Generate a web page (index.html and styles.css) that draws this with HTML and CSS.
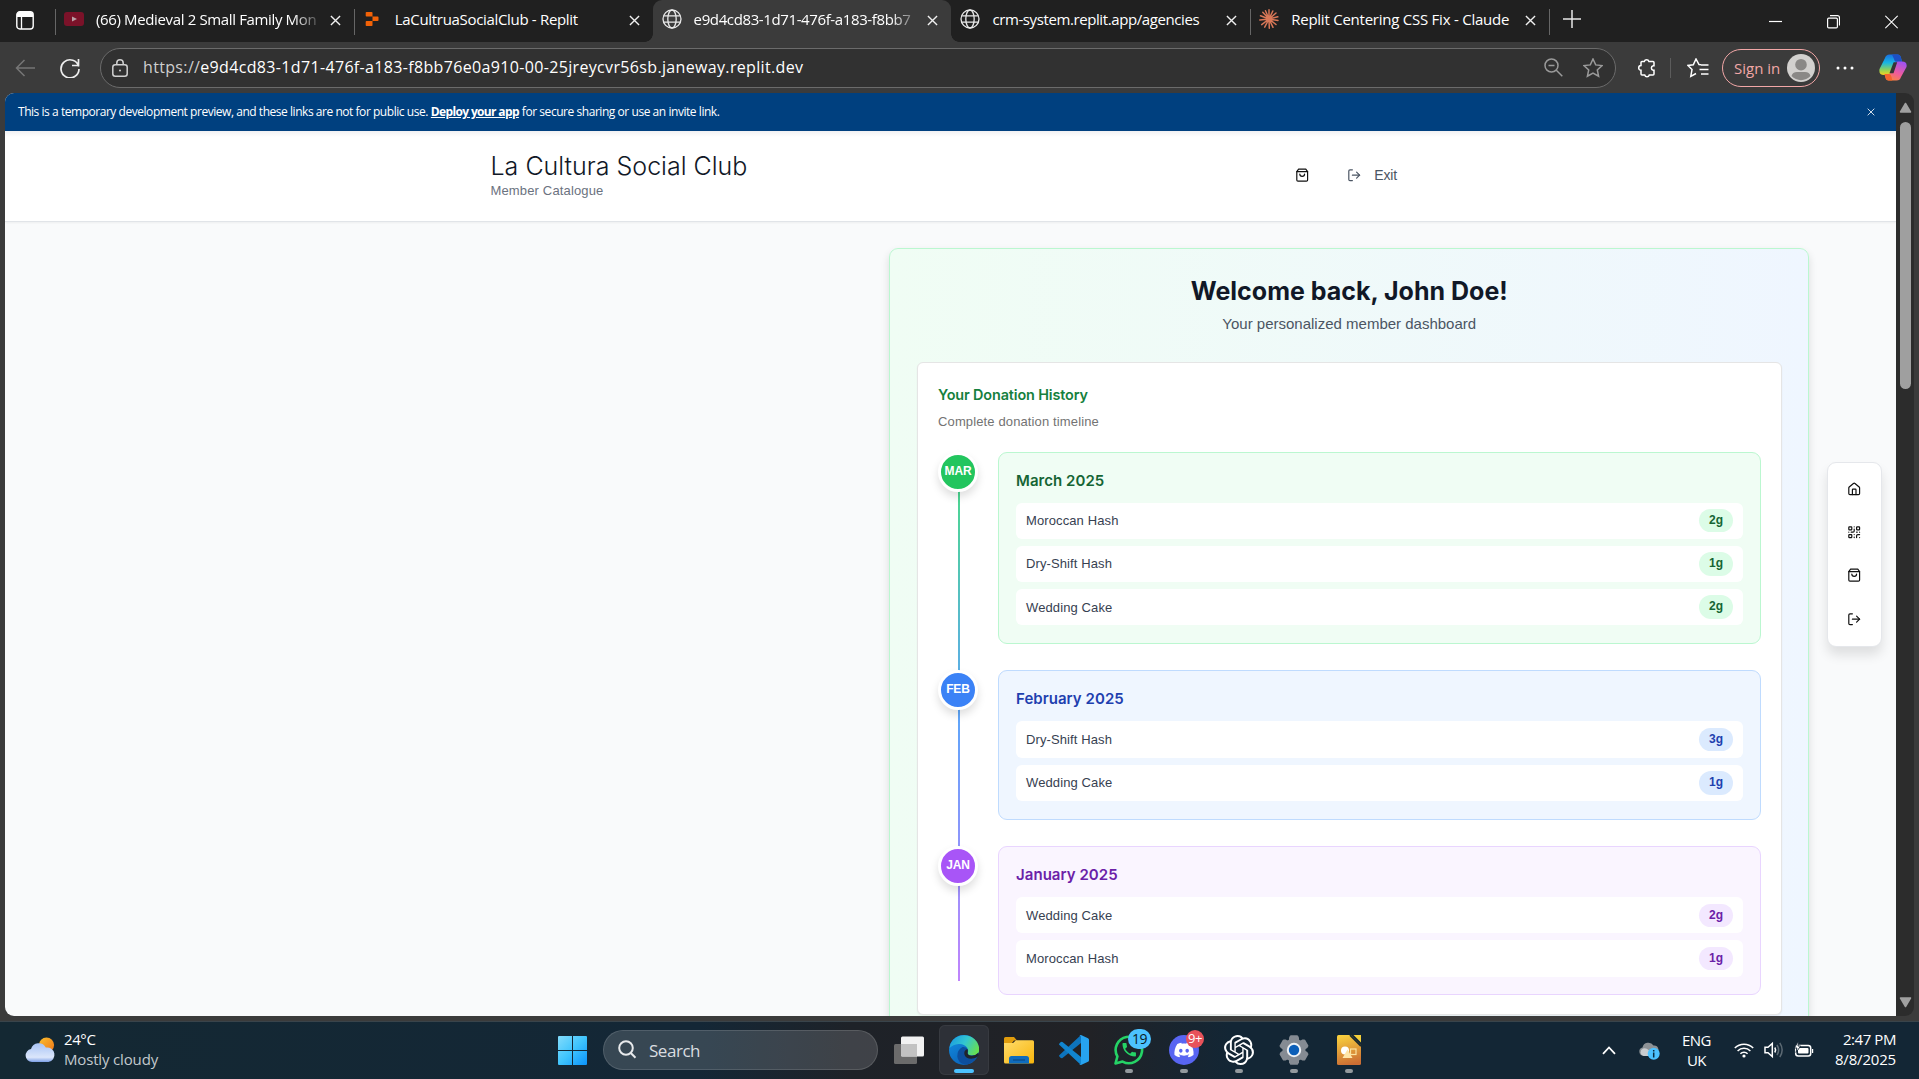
FILE: index.html
```html
<!DOCTYPE html>
<html lang="en">
<head>
<meta charset="utf-8">
<title>La Cultura Social Club</title>
<link rel="stylesheet" href="styles.css">
</head>
<body>
<svg width="0" height="0" class="defs" aria-hidden="true">
  <defs>
    <symbol id="bag" viewBox="0 0 24 24"><path d="M6 2 3 6v14a2 2 0 0 0 2 2h14a2 2 0 0 0 2-2V6l-3-4Z"/><path d="M3 6h18"/><path d="M16 10a4 4 0 0 1-8 0"/></symbol>
    <symbol id="exit" viewBox="0 0 24 24"><path d="M9 21H5a2 2 0 0 1-2-2V5a2 2 0 0 1 2-2h4"/><path d="m16 17 5-5-5-5"/><path d="M21 12H9"/></symbol>
    <symbol id="home" viewBox="0 0 24 24"><path d="M15 21v-8a1 1 0 0 0-1-1h-4a1 1 0 0 0-1 1v8"/><path d="M3 10a2 2 0 0 1 .709-1.528l7-5.999a2 2 0 0 1 2.582 0l7 5.999A2 2 0 0 1 21 10v9a2 2 0 0 1-2 2H5a2 2 0 0 1-2-2z"/></symbol>
    <symbol id="qr" viewBox="0 0 24 24"><rect width="5" height="5" x="3" y="3" rx="1"/><rect width="5" height="5" x="16" y="3" rx="1"/><rect width="5" height="5" x="3" y="16" rx="1"/><path d="M21 16h-3a2 2 0 0 0-2 2v3M21 21v.01M12 7v3a2 2 0 0 1-2 2H7M3 12h.01M12 3h.01M12 16v.01M16 12h1M21 12v.01M12 21v-1"/></symbol>
    <symbol id="x" viewBox="0 0 12 12"><path d="M1 1l10 10M11 1L1 11"/></symbol>
    <symbol id="globe" viewBox="0 0 20 20"><circle cx="10" cy="10" r="9"/><ellipse cx="10" cy="10" rx="4.2" ry="9"/><path d="M1.800 6.800h16.400M1.800 13.200h16.400"/></symbol>
    <linearGradient id="gWin" x1="0" y1="0" x2="1" y2="1"><stop offset="0" stop-color="#83dcfb"/><stop offset=".5" stop-color="#3fc4fd"/><stop offset="1" stop-color="#0b93fb"/></linearGradient>
    <linearGradient id="gEdgeTop" x1="0" y1=".2" x2="1" y2=".6"><stop offset="0" stop-color="#1a9be0"/><stop offset=".5" stop-color="#33c6d0"/><stop offset="1" stop-color="#66e052"/></linearGradient>
    <linearGradient id="gEdgeBot" x1="0" y1="0" x2=".6" y2="1"><stop offset="0" stop-color="#1390e4"/><stop offset="1" stop-color="#0a62b8"/></linearGradient>
    <linearGradient id="gFolder" x1="0" y1="0" x2="1" y2="1"><stop offset="0" stop-color="#ffdc6b"/><stop offset="1" stop-color="#f8b50c"/></linearGradient>
    <linearGradient id="gSun" x1="0" y1="0" x2="1" y2="1"><stop offset="0" stop-color="#fbc02d"/><stop offset="1" stop-color="#f07418"/></linearGradient>
    <linearGradient id="gCloud" x1="0" y1="0" x2="0" y2="1"><stop offset="0" stop-color="#a9c4f5"/><stop offset=".75" stop-color="#dbe6fb"/><stop offset="1" stop-color="#7c9fe6"/></linearGradient>
    <linearGradient id="gDraw" x1=".3" y1="0" x2=".5" y2="1"><stop offset="0" stop-color="#f8cf3e"/><stop offset="1" stop-color="#cb6d34"/></linearGradient>
    <linearGradient id="gCopA" x1="0" y1="0" x2="0" y2="1"><stop offset="0" stop-color="#1a6fe0"/><stop offset=".4" stop-color="#18b5e4"/><stop offset=".75" stop-color="#8fd25a"/><stop offset="1" stop-color="#f6d21c"/></linearGradient>
    <linearGradient id="gCopB" x1=".7" y1="0" x2=".2" y2="1"><stop offset="0" stop-color="#a152ee"/><stop offset=".55" stop-color="#ef5b9c"/><stop offset="1" stop-color="#fb8a35"/></linearGradient>
  </defs>
</svg>

<div class="tabs">
  <div class="tab-menu"><svg width="18" height="19" viewBox="0 0 18 19"><rect x=".8" y=".8" width="16.4" height="17.2" rx="3" fill="none" stroke="#fff" stroke-width="1.4"/><path d="M1 3.500Q1 1 3.500 1h11Q17 1 17 3.500V6H1z" fill="#fff"/><path d="M5.500 6v12" stroke="#fff" stroke-width="1.300"/></svg></div>
  <div class="tab lined">
    <svg class="fav" viewBox="0 0 20 20"><rect y="3" width="20" height="14" rx="3" fill="#7b1229"/><path d="M8 7.500l5 2.500-5 2.500z" fill="#b9a0a6"/></svg>
    <span class="tab-title fade t1">(66) Medieval 2 Small Family Mon</span><svg class="close"><use href="#x"/></svg>
  </div>
  <div class="tab lined">
    <svg class="fav" viewBox="0 0 20 20"><path d="M3.500 3h5.200q.8 0 .8.800v3.700H3.500q-.8 0-.8-.8V3.800q0-.8.800-.8zM9.500 7.500h5.200q.8 0 .8.800v3.000q0 .8-.8.800H9.500zM3.500 12.100h6v4.100q0 .8-.8.800H3.500q-.8 0-.8-.8v-3.300q0-.8.800-.8z" fill="#f26207"/></svg>
    <span class="tab-title t2">LaCultruaSocialClub - Replit</span><svg class="close"><use href="#x"/></svg>
  </div>
  <div class="tab active">
    <svg class="fav line"><use href="#globe"/></svg>
    <span class="tab-title fade t3">e9d4cd83-1d71-476f-a183-f8bb7</span><svg class="close"><use href="#x"/></svg>
  </div>
  <div class="tab">
    <svg class="fav line"><use href="#globe"/></svg>
    <span class="tab-title t4">crm-system.replit.app/agencies</span><svg class="close"><use href="#x"/></svg>
  </div>
  <div class="tab lined">
    <svg class="fav" viewBox="0 0 20 20"><path d="M10 10V.8M10 10l3.800-8M10 10l7-6M10 10l8.800-2.200M10 10l9 1.500M10 10l7 5.500M10 10l4 8.300M10 10l.3 9.200M10 10l-4.300 8.200M10 10l-7.300 5.600M10 10l-9.200 1M10 10L1.500 6.800M10 10L3.800 3.200M10 10L6.500 1.800" stroke="#d97757" stroke-width="1.500" stroke-linecap="round"/></svg>
    <span class="tab-title t5">Replit Centering CSS Fix - Claude</span><svg class="close"><use href="#x"/></svg>
  </div>
  <div class="newtab lined"><svg width="18" height="18" viewBox="0 0 18 18"><path d="M9 0v18M0 9h18" stroke="#e6e6e6" stroke-width="1.5"/></svg></div>
  <div class="winctl">
    <svg width="13" height="14" viewBox="0 0 13 14"><path d="M0 6.500h13" stroke="#fff" stroke-width="1.2"/></svg>
    <svg width="13" height="14" viewBox="0 0 13 14"><rect x=".6" y="3.100" width="9.800" height="9.800" rx="1.200"/><path d="M3 .7h7.500q2 0 2 2V10.500"/></svg>
    <svg width="13" height="14" viewBox="0 0 13 14"><path d="M.3.800l12.400 12.400M12.700.800L.3 13.200"/></svg>
  </div>
</div>

<div class="toolbar">
  <svg class="back" width="20" height="18" viewBox="0 0 20 18"><path d="M9.500 1L1.500 9l8 8M1.500 9H20"/></svg>
  <svg class="reload" width="20" height="20" viewBox="0 0 20 20"><path d="M18.700 8.500A9 9 0 1 0 19 11M18.500 1v6.500H12"/></svg>
  <div class="address">
    <svg width="16" height="18" viewBox="0 0 16 18"><rect x=".8" y="5.800" width="14.400" height="11.400" rx="2.500"/><path d="M4.800 5.800V4a3.200 3.200 0 0 1 6.400 0v1.800"/><circle cx="8" cy="11.500" r="1" fill="#d0d0d0" stroke="none"/></svg>
    <span class="url"><span class="scheme">https://</span>e9d4cd83-1d71-476f-a183-f8bb76e0a910-00-25jreycvr56sb.janeway.replit.dev</span>
    <svg class="dim" width="19" height="19" viewBox="0 0 19 19"><circle cx="7.500" cy="7.500" r="6.500"/><path d="M12.300 12.300l6 6M4.500 7.500h6"/></svg>
    <svg class="dim star" width="20" height="20" viewBox="0 0 20 20"><path d="M10 1l2.700 5.900 6.300.700-4.700 4.300 1.300 6.300L10 15l-5.600 3.200 1.300-6.300L1 7.600l6.300-.7z"/></svg>
  </div>
  <svg class="ext" width="20" height="20" viewBox="0 0 20 20"><path d="M5 3.500h2.300a2.400 2.400 0 0 1 4.600 0H16q1 0 1 1v3.300h-.800a2.300 2.300 0 0 0 0 4.500h.8v3.700q0 1-1 1h-3.700a2.400 2.400 0 0 1-4.600 0H5q-1 0-1-1v-3.800a2.300 2.300 0 0 1 0-4.600V4.500q0-1 1-1z"/></svg>
  <i class="bar"></i>
  <svg class="favs" width="22" height="20" viewBox="0 0 22 20"><path d="M14 6.800l-2-.2L9 1 6.300 6.700 1 7.400l4 4.200-1.200 6.700L9 15.500M14 7h7.500M12.500 11.500h9M14 16h7.500"/></svg>
  <div class="signin">Sign in<svg width="28" height="28" viewBox="0 0 28 28"><circle cx="14" cy="14" r="14" fill="#d2d0ce"/><circle cx="14" cy="10.700" r="5.800" fill="#8a8886"/><path d="M4.500 22q1-4 5.500-4h8q4.500 0 5.500 4a13 13 0 0 1-19 0z" fill="#8a8886"/></svg></div>
  <svg class="dots" width="18" height="4" viewBox="0 0 18 4"><circle cx="2" cy="2" r="1.500"/><circle cx="9" cy="2" r="1.500"/><circle cx="16" cy="2" r="1.500"/></svg>
  <svg class="copilot" width="28" height="27" viewBox="0 0 28 27"><path d="M6 4Q7 .5 10.500.5h8Q21.500.5 22 4l1 4h-4q-3 0-4 3.500L12.500 19Q11.500 21 9 21H5Q-.5 21 .5 15z" fill="url(#gCopA)"/><path d="M13 .5h5.500Q21.500.5 22 4l1.200 4H18q-2.500 0-3-3z" fill="#1d4fc4"/><path d="M22 23q-1 3.500-4.500 3.500H9.800Q7 26.500 6.300 23L5.500 20H9q3 0 4-3.500L15.500 9Q16.500 7.500 19 7.500h4Q28.500 7.500 27.500 13z" fill="url(#gCopB)"/><path d="M5.500 20H10q2 .2 2.500 3l.8 3.500H9.800Q7 26.500 6.300 23z" fill="#f4622f"/><path d="M14.600 8.200h3.600l-3.700 11h-4z" fill="#353535"/></svg>
</div>

<div class="window">
  <div class="page">
    <div class="notice"><span>This is a temporary development preview, and these links are not for public use.</span><b>Deploy your app</b><span class="n2">for secure sharing or use an invite link.</span><svg class="nx"><use href="#x"/></svg></div>
    <header class="site">
      <div class="brand"><h1>La Cultura Social Club</h1><p>Member Catalogue</p></div>
      <svg class="ic cart"><use href="#bag"/></svg>
      <div class="leave"><svg class="ic"><use href="#exit"/></svg>Exit</div>
    </header>
    <main>
      <section class="dash">
        <h2>Welcome back, John Doe!</h2>
        <p class="lead">Your personalized member dashboard</p>
        <div class="card">
          <h3>Your Donation History</h3>
          <p class="sub">Complete donation timeline</p>
          <div class="timeline">
            <i class="spine"></i>
            <div class="entry green"><div class="dot">MAR</div><div class="month"><h4>March 2025</h4>
              <div class="row">Moroccan Hash<span>2g</span></div><div class="row">Dry-Shift Hash<span>1g</span></div><div class="row">Wedding Cake<span>2g</span></div></div></div>
            <div class="entry blue"><div class="dot">FEB</div><div class="month"><h4>February 2025</h4>
              <div class="row">Dry-Shift Hash<span>3g</span></div><div class="row">Wedding Cake<span>1g</span></div></div></div>
            <div class="entry purple"><div class="dot">JAN</div><div class="month"><h4>January 2025</h4>
              <div class="row">Wedding Cake<span>2g</span></div><div class="row">Moroccan Hash<span>1g</span></div></div></div>
          </div>
        </div>
      </section>
    </main>
    <nav class="side"><svg class="ic"><use href="#home"/></svg><svg class="ic"><use href="#qr"/></svg><svg class="ic"><use href="#bag"/></svg><svg class="ic"><use href="#exit"/></svg></nav>
  </div>
  <div class="scroll">
    <svg width="13" height="11" viewBox="0 0 13 11"><path d="M6.500 1.500l5 8.500h-10z" fill="#a0a0a0" stroke="#a0a0a0" stroke-width="1.500" stroke-linejoin="round"/></svg>
    <i class="thumb"></i>
    <svg width="13" height="11" viewBox="0 0 13 11"><path d="M6.500 9.500l5-8.500h-10z" fill="#a0a0a0" stroke="#a0a0a0" stroke-width="1.500" stroke-linejoin="round"/></svg>
  </div>
</div>

<footer class="taskbar">
  <div class="weather">
    <svg width="31" height="26" viewBox="0 0 31 26"><circle cx="21.500" cy="8" r="7.600" fill="url(#gSun)"/><path d="M7 25a6.500 6.500 0 0 1-1-12.900 8 8 0 0 1 14.800-1.500A7.300 7.300 0 0 1 23.500 25z" fill="url(#gCloud)"/></svg>
    <div><div class="temp">24°C</div><div class="sky">Mostly cloudy</div></div>
  </div>
  <svg class="start" width="29" height="29" viewBox="0 0 29 29"><path d="M1 0h13v14H0V1q0-1 1-1zM15 0h13q1 0 1 1v13H15zM0 15h14v14H1q-1 0-1-1zM15 15h14v13q0 1-1 1H15z" fill="url(#gWin)"/></svg>
  <div class="search"><svg width="19" height="19" viewBox="0 0 19 19"><circle cx="8" cy="8" r="6.800"/><path d="M12.800 13l4.700 4.800"/></svg>Search</div>
  <div class="apps">
    <div class="app"><svg viewBox="0 0 30 30"><rect y="9" width="23" height="20" rx="1.500" fill="#6b6b6b"/><rect x="7" y="1.500" width="23" height="20" rx="1.500" fill="#f2f2f2"/><path d="M7 9h16v12.500H8.500Q7 21.500 7 20z" fill="#c2c2c2"/></svg></div>
    <div class="app on"><svg viewBox="0 0 30 30"><circle cx="15" cy="15" r="15" fill="url(#gEdgeBot)"/><path d="M.5 13Q2 3 11 .7 22-1.500 28 7q3.500 6.500 1.500 10.500Q28 20.500 23 20.500q-5 0-4.500-2.500 1.500-2.500-.5-5.500Q15 8.500 9.500 9 4 9.600.5 13z" fill="url(#gEdgeTop)"/><path d="M18.600 17.500q-.5 3 4.400 3.200 3 0 6-2.500-.5 3.500-3.500 6.700Q21 29.500 16 29.800 9 28 8.300 21.500 8 15 13.500 12q4-.5 5.300 2.500.6 1.500-.2 3z" fill="#0d4f9e"/><path d="M18.600 17.500q-.5 3 4.400 3.200 3.500 0 6.300-3l.5 2.500-1.800 2Q22 25 17.500 22.500q-3-2.500-2-6 .8-2 2.800-2.500.9 1.700.3 3.500z" fill="#20242c"/></svg><i></i></div>
    <div class="app"><svg viewBox="0 0 30 30"><path d="M0 3.500Q0 2 1.500 2H10l3 3.500h-3L8 8H0z" fill="#e09c0c"/><path d="M0 8h9l3-2.800h16.500Q30 5.200 30 6.700v20.300q0 1.500-1.500 1.500h-27Q0 28.500 0 27z" fill="url(#gFolder)"/><path d="M5 28.500v-5Q5 21 7.500 21h15q2.500 0 2.500 2.500v5z" fill="#0f6cbd"/><path d="M9 25h12" stroke="#0b4a86" stroke-width="1.200"/></svg></div>
    <div class="app"><svg viewBox="0 0 30 30"><path d="M22 0v8L3.500 23Q2.500 23.500 1.500 22.700L.4 21.600q-.8-.9.100-1.700z" fill="#0d74bd"/><path d="M22 30v-8L3.500 7Q2.500 6.500 1.500 7.300L.4 8.400q-.8.900.1 1.700z" fill="#1185cf"/><path d="M22 0l7 3.200q1 .5 1 1.600v20.400q0 1.100-1 1.600L22 30q-1 .2-1.700-.6Q22 30 22 28V2Q22 0 20.300.6 21-.2 22 0z" fill="#27a3ef"/></svg></div>
    <div class="app run"><svg viewBox="0 0 30 30"><path d="M1.500 28.500l1.900-7A13.200 13.200 0 1 1 8.600 26.600z" fill="none" stroke="#25d366" stroke-width="2.600" stroke-linejoin="round"/><path transform="translate(6.200 5.700) scale(.75)" d="M6.620 10.790c1.440 2.830 3.760 5.140 6.590 6.590l2.200-2.200c.27-.27.67-.36 1.020-.24 1.120.37 2.330.57 3.570.57.55 0 1 .45 1 1V20c0 .55-.45 1-1 1-9.390 0-17-7.610-17-17 0-.55.45-1 1-1h3.500c.55 0 1 .45 1 1 0 1.250.2 2.450.57 3.570.11.35.03.74-.25 1.020z" fill="#25d366"/></svg><i></i><b class="badge blue-b">19</b></div>
    <div class="app run"><svg viewBox="0 0 30 30"><circle cx="15" cy="15" r="15" fill="#5865f2"/><path transform="translate(5.400 5.400) scale(.8)" fill="#fff" d="M20.317 4.370a19.791 19.791 0 00-4.885-1.515.074.074 0 00-.079.037c-.211.375-.445.865-.608 1.250-1.845-.276-3.680-.276-5.487 0-.164-.393-.406-.874-.618-1.250a.077.077 0 00-.079-.037 19.736 19.736 0 00-4.885 1.515.07.07 0 00-.032.028C.533 9.046-.319 13.580.099 18.058a.082.082 0 00.031.056c2.053 1.508 4.041 2.423 5.993 3.029a.078.078 0 00.084-.028c.462-.63.873-1.295 1.226-1.994a.076.076 0 00-.042-.106c-.653-.248-1.274-.55-1.872-.892a.077.077 0 01-.008-.128c.126-.094.252-.192.372-.291a.074.074 0 01.078-.011c3.928 1.793 8.180 1.793 12.061 0a.074.074 0 01.079.01c.12.099.246.198.373.292a.077.077 0 01-.007.128 12.299 12.299 0 01-1.873.891.077.077 0 00-.041.107c.36.698.772 1.363 1.225 1.993a.076.076 0 00.084.029c1.961-.607 3.950-1.522 6.002-3.029a.077.077 0 00.031-.055c.5-5.177-.838-9.674-3.549-13.660a.061.061 0 00-.031-.029zM8.020 15.331c-1.183 0-2.157-1.086-2.157-2.419 0-1.333.956-2.419 2.157-2.419 1.211 0 2.176 1.095 2.157 2.419 0 1.333-.956 2.419-2.157 2.419zm7.975 0c-1.183 0-2.157-1.086-2.157-2.419 0-1.333.955-2.419 2.157-2.419 1.211 0 2.176 1.095 2.157 2.419 0 1.333-.946 2.419-2.157 2.419Z"/></svg><i></i><b class="badge red-b">9+</b></div>
    <div class="app run"><svg viewBox="0 0 24 24"><path fill="#fff" d="M22.2819 9.8211a5.9847 5.9847 0 0 0-.5157-4.9108 6.0462 6.0462 0 0 0-6.5098-2.9A6.0651 6.0651 0 0 0 4.9807 4.1818a5.9847 5.9847 0 0 0-3.9977 2.9 6.0462 6.0462 0 0 0 .7427 7.0966 5.98 5.98 0 0 0 .511 4.9107 6.051 6.051 0 0 0 6.5146 2.9001A5.9847 5.9847 0 0 0 13.2599 24a6.0557 6.0557 0 0 0 5.7718-4.2058 5.9894 5.9894 0 0 0 3.9977-2.9001 6.0557 6.0557 0 0 0-.7475-7.0729zm-9.022 12.6081a4.4755 4.4755 0 0 1-2.8764-1.0408l.1419-.0804 4.7783-2.7582a.7948.7948 0 0 0 .3927-.6813v-6.7369l2.02 1.1686a.071.071 0 0 1 .038.052v5.5826a4.504 4.504 0 0 1-4.4945 4.4944zm-9.6607-4.1254a4.4708 4.4708 0 0 1-.5346-3.0137l.142.0852 4.783 2.7582a.7712.7712 0 0 0 .7806 0l5.8428-3.3685v2.3324a.0804.0804 0 0 1-.0332.0615L9.74 19.9502a4.4992 4.4992 0 0 1-6.1408-1.6464zM2.3408 7.8956a4.485 4.485 0 0 1 2.3655-1.9728V11.6a.7664.7664 0 0 0 .3879.6765l5.8144 3.3543-2.0201 1.1685a.0757.0757 0 0 1-.071 0l-4.8303-2.7865A4.504 4.504 0 0 1 2.3408 7.872zm16.5963 3.8558L13.1038 8.364 15.1192 7.2a.0757.0757 0 0 1 .071 0l4.8303 2.7913a4.4944 4.4944 0 0 1-.6765 8.1042v-5.6772a.79.79 0 0 0-.407-.667zm2.0107-3.0231l-.142-.0852-4.7735-2.7818a.7759.7759 0 0 0-.7854 0L9.409 9.2297V6.8974a.0662.0662 0 0 1 .0284-.0615l4.8303-2.7866a4.4992 4.4992 0 0 1 6.6802 4.66zM8.3065 12.863l-2.02-1.1638a.0804.0804 0 0 1-.038-.0567V6.0742a4.4992 4.4992 0 0 1 7.3757-3.4537l-.142.0805L8.704 5.459a.7948.7948 0 0 0-.3927.6813zm1.0976-2.3654l2.602-1.4998 2.6069 1.4998v2.9994l-2.5974 1.4997-2.6067-1.4997Z"/></svg><i></i></div>
    <div class="app run"><svg viewBox="0 0 30 30"><g fill="#858b93"><circle cx="15" cy="15" r="11.500"/><g id="teeth"><path d="M10 2.500L11 .8q.3-.5 1-.5h6q.7 0 1 .5l1 1.700v25l-1 1.700q-.3.500-1 .5h-6q-.7 0-1-.5l-1-1.700z"/></g><use href="#teeth" transform="rotate(60 15 15)"/><use href="#teeth" transform="rotate(120 15 15)"/></g><circle cx="15" cy="15" r="6.200" fill="#0c5fb8" stroke="#eef2f6" stroke-width="2"/></svg><i></i></div>
    <div class="app run"><svg viewBox="0 0 30 30"><path d="M3 1.500Q3 0 4.500 0H17l10 10v18.500q0 1.500-1.500 1.500h-21Q3 30 3 28.500z" fill="url(#gDraw)"/><path d="M19.500 0H27v7.500z" fill="#f3cf3a"/><path d="M16 0l11 11" stroke="#1b2a2c" stroke-width="1.800"/><circle cx="11" cy="15.500" r="4" fill="#fff"/><path d="M13.500 14.500l5 8.500h-10z" fill="#ffe6a8"/><rect x="16.500" y="14" width="5.500" height="5.500" fill="none" stroke="#fbe3a0" stroke-width="1.200"/></svg><i></i></div>
  </div>
  <div class="tray">
    <svg class="chev" width="14" height="9" viewBox="0 0 14 9"><path d="M1 7.800l6-6.300 6 6.300"/></svg>
    <svg class="cloud" width="21" height="18" viewBox="0 0 21 18"><path d="M4 13.500A4 4 0 0 1 3.500 5.600 6 6 0 0 1 14.500 3.500 4.500 4.500 0 0 1 17 12z" fill="#8d9296"/><path d="M4.500 14a4 4 0 0 1-.5-7.500q3.500-.8 5.500 1.500l5 6z" fill="#c9cccf"/><circle cx="14.700" cy="11.700" r="6" fill="#4cc2ff"/><path d="M14.700 10.500v5M14.700 8v1.500" stroke="#0b2a3c" stroke-width="1.500"/></svg>
    <div class="lang"><div>ENG</div><div>UK</div></div>
    <svg class="wifi" width="20" height="16" viewBox="0 0 20 16"><path d="M.8 6a13 13 0 0 1 18.400 0M3.600 9a9 9 0 0 1 12.800 0M6.400 11.800a5 5 0 0 1 7.200 0"/><circle cx="10" cy="14" r="1.600" fill="#fff" stroke="none"/></svg>
    <svg class="vol" width="20" height="18" viewBox="0 0 20 18"><path d="M1 6.300h3L8.300 2.500v13L4 11.700H1z"/><path d="M10.800 6.500q1.600 2.500 0 5"/><path d="M13 4q3.300 5 0 10M15.800 1.800q4.700 7.200 0 14.400" stroke="#5c6973"/></svg>
    <svg class="bat" width="20" height="17" viewBox="0 0 20 17"><rect x="1.700" y="4.500" width="15" height="10.500" rx="2.500"/><rect x="4" y="7" width="10.500" height="5.500" rx="1" fill="#fff" stroke="none"/><path d="M18 8v4h1.200V8z" fill="#fff" stroke="none"/><path d="M4.500 0L.3 7h2.600L2 11.500 6.700 5H4z" fill="#fff" stroke="#142635" stroke-width=".9"/></svg>
    <div class="clock"><div class="time">2:47 PM</div><div>8/8/2025</div></div>
  </div>
</footer>
</body>
</html>
```
FILE: styles.css
```css
* { box-sizing: border-box; margin: 0; padding: 0; }
body { width: 1919px; height: 1079px; overflow: hidden; display: flex; flex-direction: column; background: #3b3b3b; font-family: "Open Sans", sans-serif; color: #fff; }
svg { display: block; flex: none; fill: none; }
.defs { position: absolute; }
h1, h2, h3, h4 { font-family: Inter, sans-serif; }

/* tab strip */
.tabs { height: 42px; flex: none; display: flex; background: #202020; }
.tab-menu { width: 55px; padding: 11px 0 0 16px; }
.tab { width: 298.800px; height: 42px; display: flex; align-items: center; padding: 0 13px 4px 9px; position: relative; }
.tab.active { background: #3b3b3b; border-radius: 9px 9px 0 0; }
.tab.active::before, .tab.active::after { content: ""; position: absolute; bottom: 0; width: 8px; height: 8px; }
.tab.active::before { left: -8px; background: radial-gradient(circle at 0 0, #202020 7.500px, #3b3b3b 8px); }
.tab.active::after { right: -8px; background: radial-gradient(circle at 100% 0, #202020 7.500px, #3b3b3b 8px); }
.lined { background: linear-gradient(#666, #666) 0 9px / 1px 26px no-repeat; }
.fav { width: 20px; height: 20px; }
.fav.line { stroke: #e8e8e8; stroke-width: 1.300; }
.tab-title { flex: 1; margin-left: 12px; margin-right: 10px; font-size: 15px; line-height: 20px; white-space: nowrap; }
.fade { -webkit-mask-image: linear-gradient(90deg, #000 197px, rgba(0,0,0,.15) 223px); mask-image: linear-gradient(90deg, #000 197px, rgba(0,0,0,.15) 223px); }
.t1 { letter-spacing: -.36px; }
.t2 { letter-spacing: -.32px; }
.t3 { letter-spacing: -.38px; }
.t4 { letter-spacing: -.4px; }
.t5 { letter-spacing: -.24px; }
.close { width: 11px; height: 11px; stroke: #f0f0f0; stroke-width: 1.500; margin-top: 3px; }
.newtab { width: 60px; padding: 10px 0 0 14px; }
.winctl { display: flex; gap: 45px; margin-left: auto; padding: 15px 21px 0 0; stroke: #fff; stroke-width: 1.200; }

/* toolbar */
.toolbar { height: 51px; flex: none; display: flex; align-items: center; padding-left: 15px; stroke: #fff; stroke-width: 1.500; }
.back { stroke: #767676; }
.reload { margin-left: 25px; stroke: #ededed; stroke-width: 1.700; }
.address { width: 1516px; height: 40px; margin-left: 20px; border: 1px solid #6b6b6b; border-radius: 20px; background: #313131; display: flex; align-items: center; padding: 0 12px 0 11px; stroke: #d0d0d0; }
.url { flex: 1; margin-left: 15px; font-size: 16px; letter-spacing: .34px; line-height: 22px; margin-top: -1px; stroke: none; }
.scheme { color: #cfcfcf; }
.dim { stroke: #9a9a9a; }
.star { margin-left: 20px; }
.ext { margin-left: 21px; }
.bar { width: 1px; height: 20px; background: #5c5c5c; margin-left: 13px; }
.favs { margin-left: 16px; }
.signin { width: 98px; height: 38px; margin-left: 13px; border: 1.500px solid #f2a7a7; border-radius: 19px; display: flex; align-items: center; justify-content: space-between; padding: 0 4px 0 11px; font-size: 15px; line-height: 20px; color: #f2a7a7; stroke: none; }
.dots { margin-left: 16px; fill: #fff; stroke: none; }
.copilot { margin-left: 25px; stroke: none; }

/* browser viewport */
.window { height: 922.500px; flex: none; margin: 0 5px; display: flex; border-radius: 9px; overflow: hidden; }
.page { flex: 1; position: relative; background: #f9fafb; overflow: hidden; color: #111827; font-family: "Liberation Sans", Arial, sans-serif; }
.notice { height: 37.500px; background: #00407f; color: #fff; font: 12px/37px "Open Sans", sans-serif; display: flex; padding-left: 13px; letter-spacing: -.46px; position: relative; white-space: pre; }
.notice b { letter-spacing: -.65px; margin: 0 3px; text-decoration: underline; }
.notice .n2 { letter-spacing: -.45px; }
.nx { width: 8px; height: 8px; stroke: #cfdbe8; stroke-width: 1.500; margin: 14.500px 21.500px 0 auto; }
.site { height: 91.500px; background: linear-gradient(#f1f1f3, #fff 6px); border-bottom: 1px solid #e1e4e8; box-shadow: 0 1px 2px rgba(0,0,0,.05); display: flex; padding-left: 485.500px; position: relative; }
.brand { width: 800.500px; padding-top: 20.500px; }
.brand h1 { font-size: 25px; font-weight: 300; line-height: 30px; letter-spacing: 0; }
.brand p { font-size: 13px; line-height: 18px; letter-spacing: .15px; color: #6b7280; margin-top: .5px; }
.ic { width: 14.400px; height: 14.400px; stroke: #111; stroke-width: 2; stroke-linecap: round; stroke-linejoin: round; }
.cart { margin: 37.500px 0 0 3.500px; }
.leave { display: flex; align-items: center; gap: 13px; height: 18px; margin: 35.500px 0 0 38px; font-size: 14px; letter-spacing: -.2px; color: #4b5563; }
.leave .ic { stroke: #4b5563; }

/* dashboard */
main { padding: 26px 87px 0 884px; }
.dash { height: 1000px; border: 1px solid #bbf7d0; border-radius: 9px; padding: 26px 26.500px 26px 27px; background: linear-gradient(90deg, #f0fdf4, #eff6ff); box-shadow: 0 4px 8px rgba(0,0,0,.12); text-align: center; }
.dash h2 { font-size: 25px; font-weight: 700; line-height: 32px; }
.lead { font-size: 15px; line-height: 20px; margin-top: 7px; color: #4b5563; }
.card { margin-top: 28px; height: 653px; background: #fff; border: 1px solid #e5e5e5; border-radius: 6px; box-shadow: 0 1px 2px rgba(0,0,0,.06); padding: 20px; text-align: left; }
.card h3 { font-size: 14.400px; font-weight: 600; letter-spacing: -.13px; line-height: 22px; padding-top: 1px; color: #15803d; }
.sub { font-size: 13px; letter-spacing: .13px; line-height: 18px; margin-top: 7px; color: #737373; }
.timeline { position: relative; margin-top: 20.500px; display: flex; flex-direction: column; gap: 26.600px; }
.spine { position: absolute; left: 19.500px; top: 4px; height: 525px; width: 2px; background: linear-gradient(#4ade80, #60a5fa, #c084fc); }
.entry { display: flex; gap: 20px; }
.dot { position: relative; width: 40px; height: 40px; border: 3px solid #fff; border-radius: 50%; background: var(--dot); box-shadow: 0 5px 9px rgba(0,0,0,.13); color: #fff; font: bold 12px/32px "Liberation Sans", sans-serif; letter-spacing: -.1px; display: flex; justify-content: center; }
.month { flex: 1; border: 1px solid var(--line); border-radius: 9px; background: var(--bg); padding: 17px 17px 17.500px; display: flex; flex-direction: column; gap: 7px; }
.month h4 { font-size: 15px; font-weight: 600; line-height: 22px; letter-spacing: .05px; color: var(--ink); margin-bottom: 4px; }
.row { height: 36.300px; background: #fff; border-radius: 6px; display: flex; align-items: center; justify-content: space-between; padding: 0 10px; font-size: 13px; letter-spacing: .11px; color: #374151; }
.row span { width: 34px; height: 23.500px; border-radius: 12px; background: var(--pill); color: var(--ink); font: bold 12px/23px "Liberation Sans", sans-serif; letter-spacing: 0; text-align: center; padding-left: 1px; }
.green { --dot: #22c55e; --line: #bbf7d0; --bg: #f0fdf4; --pill: #dcfce7; --ink: #166534; }
.blue { --dot: #3b82f6; --line: #bfdbfe; --bg: #eff6ff; --pill: #dbeafe; --ink: #1e40af; }
.purple { --dot: #a855f7; --line: #e9d5ff; --bg: #faf5ff; --pill: #f3e8ff; --ink: #6b21a8; }
.side { position: absolute; right: 14px; top: 369px; width: 55.500px; height: 185px; background: #fff; border: 1px solid #e5e7eb; border-radius: 9px; box-shadow: 0 8px 12px rgba(0,0,0,.11); display: flex; flex-direction: column; align-items: center; gap: 29px; padding-top: 18.500px; }

.scroll { width: 18px; background: #2c2c2c; display: flex; flex-direction: column; align-items: center; padding: 9px 0 8px; }
.thumb { width: 11px; height: 267px; margin: 9px 0 auto; border-radius: 6px; background: #9f9f9f; }

/* taskbar */
.taskbar { height: 58.500px; margin-top: auto; border-top: 1px solid #39444b; display: flex; align-items: center; background: linear-gradient(90deg, #142833 0, #142736 700px, #1e2228 850px, #212226 1090px, #132635 1230px); position: relative; }
.weather { width: 533px; padding-left: 25px; display: flex; align-items: center; gap: 8px; font-size: 15px; line-height: 20px; margin-top: -1px; }
.temp { letter-spacing: -.4px; margin-top: -1px; }
.sky { letter-spacing: -.16px; color: #c3c9cd; }
.start { margin-left: 25px; }
.search { width: 275px; height: 40px; margin-left: 16px; border-radius: 20px; border: 1px solid rgba(255,255,255,.13); background: rgba(255,255,255,.15); display: flex; align-items: center; gap: 12px; padding-left: 14px; font-size: 17px; letter-spacing: -.47px; color: #dadde0; }
.search svg { margin-top: -1px; stroke: #e8eaec; stroke-width: 2; }
.apps { display: flex; gap: 5px; margin-left: 6px; }
.app { width: 50px; height: 50px; border-radius: 6px; display: flex; justify-content: center; padding-top: 10px; position: relative; }
.app > svg { width: 30px; height: 30px; }
.app.on { background: #2d3037; box-shadow: inset 0 0 0 1px #373a40; }
.app i { position: absolute; bottom: 2px; left: 21px; width: 8px; height: 4px; border-radius: 2px; background: #93999e; }
.app.on i { left: 15px; width: 20px; background: #4cc2ff; }
.badge { position: absolute; border-radius: 12px; text-align: center; font-weight: 400; letter-spacing: -.5px; }
.blue-b { left: 24px; top: 4px; width: 23px; height: 20px; background: #4cc2ff; color: #0a1a24; font-size: 14px; line-height: 19px; }
.red-b { left: 27px; top: 5px; width: 18px; height: 18px; background: #e8525a; color: #fff; font-size: 13px; line-height: 17px; }
.tray { margin-left: auto; margin-right: 23px; display: flex; align-items: center; font-size: 15px; line-height: 20px; stroke: none; }
.tray svg { stroke: #fff; stroke-width: 1.500; }
.tray .chev { stroke-width: 1.800; }
.tray .cloud { margin-left: 23px; stroke: none; margin-top: 2px; }
.lang { width: 40px; margin-left: 16.500px; text-align: center; letter-spacing: -.5px; }
.wifi { margin-left: 17px; }
.vol { margin-left: 10px; }
.bat { margin-left: 10px; margin-top: -2px; }
.clock { width: 82.500px; text-align: right; letter-spacing: -.18px; margin-top: -2px; }
.time { letter-spacing: -.44px; }
```
